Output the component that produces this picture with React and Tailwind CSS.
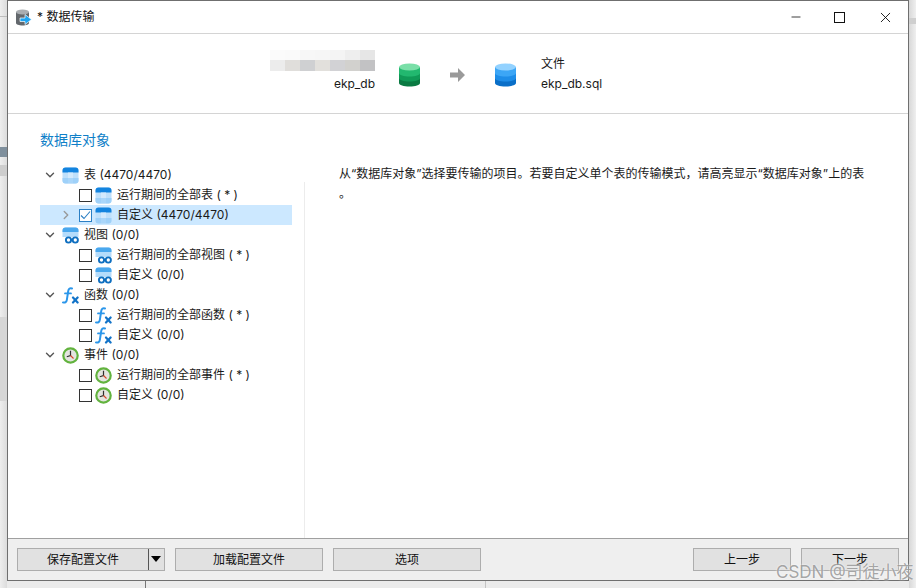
import { ChevronDown, ChevronRight, Minus, X } from "lucide-react";

const FONT = "[font-family:'Inter','Noto_Sans_CJK_SC',sans-serif]";

const MOSAIC_TOP = ["bg-[#fbfbfb]", "bg-[#fafafa]", "bg-[#f7f7f7]", "bg-[#f6f6f6]", "bg-[#f4f4f4]", "bg-[#eeeeee]", "bg-[#e6e6e6]"];
const MOSAIC_BOTTOM = ["bg-[#ececec]", "bg-[#e0dedb]", "bg-[#cfd0d2]", "bg-[#e2e0dc]", "bg-[#d2d2d5]", "bg-[#d2d1ce]", "bg-[#c2c2c4]"];

function TableIcon() {
  return (
    <svg width="17" height="17" viewBox="0 0 17 17">
      <rect x="0.5" y="0.5" width="16" height="16" rx="3" fill="#bfe0fb" />
      <path d="M0.5 5.500V3.500a3 3 0 0 1 3-3h10a3 3 0 0 1 3 3V5.500z" fill="#1384df" />
      <rect x="6" y="5.500" width="5" height="5.500" fill="#d3eafd" />
      <rect x="6" y="11" width="5" height="5.500" fill="#a9d6fa" />
      <path d="M0.500 11h5.500v5.500H3.500a3 3 0 0 1-3-3z" fill="#9fd1f9" />
      <path d="M11 11h5.500v2.500a3 3 0 0 1-3 3H11z" fill="#9fd1f9" />
    </svg>
  );
}

function ViewIcon() {
  return (
    <svg width="17" height="17" viewBox="0 0 17 17">
      <path d="M0.5 14V3.500a3 3 0 0 1 3-3h10a3 3 0 0 1 3 3V10H0.5z" fill="#b5dcfb" />
      <path d="M0.5 5V3.500a3 3 0 0 1 3-3h10a3 3 0 0 1 3 3V5z" fill="#4aa8ee" />
      <circle cx="6.500" cy="13" r="2.600" fill="#fff" stroke="#0f6fc0" strokeWidth="1.900" />
      <circle cx="13.300" cy="13" r="2.600" fill="#fff" stroke="#0f6fc0" strokeWidth="1.900" />
      <path d="M9 12.600h2" stroke="#0f6fc0" strokeWidth="1.400" />
    </svg>
  );
}

function FuncIcon() {
  return (
    <svg width="17" height="17" viewBox="0 0 17 17" fill="none">
      <path d="M10 1.500C7.600 .8 6.500 2 6.200 4.200L4.900 12.600C4.500 15 3.200 16 1 15.400" stroke="#2b96ea" strokeWidth="2" strokeLinecap="round" />
      <path d="M3 6.400h6" stroke="#2b96ea" strokeWidth="1.800" strokeLinecap="round" />
      <path d="M11 10.500l4.600 5M15.600 10.500l-4.600 5" stroke="#1273c8" strokeWidth="2.200" strokeLinecap="round" />
    </svg>
  );
}

function ClockIcon() {
  return (
    <svg width="17" height="17" viewBox="0 0 17 17" fill="none">
      <circle cx="8.500" cy="8.500" r="7.200" fill="#e4e4e0" stroke="#62b33e" strokeWidth="2.200" />
      <path d="M8.500 3.800v4.700L4.800 9.800" stroke="#2f2f2f" strokeWidth="1.200" />
      <path d="M8.500 8.500l3 3" stroke="#d8472b" strokeWidth="1.100" />
    </svg>
  );
}

function DbIcon({ colors }) {
  return (
    <svg width="21" height="24" viewBox="0 0 21 24">
      <path d="M0 4h21v16c0 2-4.700 3.500-10.500 3.500S0 22 0 20z" fill={colors[3]} />
      <path d="M0 4h21v11c0 2-4.700 3.500-10.500 3.500S0 17 0 15z" fill={colors[2]} />
      <path d="M0 4h21v6c0 2-4.700 3.500-10.500 3.500S0 12 0 10z" fill={colors[1]} />
      <ellipse cx="10.500" cy="4" rx="10.500" ry="3.500" fill={colors[0]} />
    </svg>
  );
}

function TitleIcon() {
  return (
    <svg width="16" height="17" viewBox="0 0 16 17">
      <path d="M0 3h13v11c0 1.400-2.900 2.500-6.500 2.500S0 15.400 0 14z" fill="#63686d" />
      <ellipse cx="6.500" cy="3" rx="6.500" ry="2.500" fill="#a9adb1" />
      <path d="M4 9h5V5.500l6.500 5-6.500 5V12.500H4z" fill="#1ea5f2" stroke="#fff" strokeWidth="0.700" />
    </svg>
  );
}

function Checkbox({ checked }) {
  return (
    <span className={`flex h-[13px] w-[13px] shrink-0 items-center justify-center border bg-white ${checked ? "border-[#2b7fc4]" : "border-[#333333]"}`}>
      {checked ? (
        <svg width="11" height="11" viewBox="0 0 11 11" fill="none">
          <path d="M1 5.500l3 3 6-7" stroke="#2b7fc4" strokeWidth="1.100" />
        </svg>
      ) : null}
    </span>
  );
}

const TREE = [
  { icon: TableIcon, label: "表 (4470/4470)", items: [
    { label: "运行期间的全部表 ( * )" },
    { label: "自定义 (4470/4470)", selected: true },
  ] },
  { icon: ViewIcon, label: "视图 (0/0)", items: [
    { label: "运行期间的全部视图 ( * )" },
    { label: "自定义 (0/0)" },
  ] },
  { icon: FuncIcon, label: "函数 (0/0)", items: [
    { label: "运行期间的全部函数 ( * )" },
    { label: "自定义 (0/0)" },
  ] },
  { icon: ClockIcon, label: "事件 (0/0)", items: [
    { label: "运行期间的全部事件 ( * )" },
    { label: "自定义 (0/0)" },
  ] },
];

function TreeGroup({ group }) {
  const Icon = group.icon;
  return (
    <div>
      <div className="flex h-5 items-center pl-[3px]">
        <ChevronDown size={14} strokeWidth={2.400} className="text-[#555555]" />
        <span className="ml-[5px] flex w-[22px] shrink-0"><Icon /></span>
        <span>{group.label}</span>
      </div>
      {group.items.map((item) => (
        <div key={item.label} className={`flex h-5 items-center ${item.selected ? "bg-[#cce8ff]" : ""}`}>
          <span className="flex w-[39px] shrink-0 justify-end pr-[6px]">
            {item.selected ? <ChevronRight size={14} strokeWidth={2.400} className="text-[#999999]" /> : null}
          </span>
          <Checkbox checked={item.selected} />
          <span className="ml-[3px] flex w-[22px] shrink-0"><Icon /></span>
          <span className="whitespace-nowrap">{item.label}</span>
        </div>
      ))}
    </div>
  );
}

function FooterButton({ className, children }) {
  return (
    <button type="button" className={`flex h-[23px] items-center justify-center border border-[#adadad] bg-[#e1e1e1] text-[#111111] ${className}`}>
      {children}
    </button>
  );
}

export default function App() {
  return (
    <div className={`${FONT} relative flex h-[588px] w-[916px] overflow-hidden bg-[#ebebeb] text-[12px] text-[#1a1a1a]`}>
      {/* stuff behind the dialog on the left */}
      <div className="flex h-full w-[7px] shrink-0 flex-col bg-linear-to-r from-[#eeeeee] to-[#dcdcdc]">
        <div className="mt-[16px] h-px bg-[#bdbdbd]" />
        <div className="mt-[130px] h-[10px] bg-[#7f8f9c]" />
        <div className="mt-[8px] h-[11px] bg-[#cdcdcd]" />
        <div className="mt-[141px] h-[84px] bg-[#d6d6d6]" />
      </div>

      <div className="flex h-[581px] w-[902px] shrink-0 flex-col border border-[#6f6f6f] bg-white">
        {/* title bar */}
        <div className="flex h-[33px] shrink-0 items-center border-b border-[#d4d4d4]">
          <span className="ml-[8px] flex"><TitleIcon /></span>
          <span className="ml-[5px] text-[#111111]">* 数据传输</span>
          <div className="ml-auto flex items-center">
            <Minus size={14} strokeWidth={1.300} className="text-black" />
            <span className="ml-[31px] h-[11px] w-[11px] border border-[#111111]" />
            <X size={17} strokeWidth={1.200} className="ml-[32px] mr-[14px] text-black" />
          </div>
        </div>

        {/* source and target */}
        <div className="flex h-[80px] shrink-0 border-b border-[#d4d4d4]">
          <div className="ml-[262px] flex w-[105px] flex-col items-end pt-[16px]">
            <div className="flex h-[10px]">
              {MOSAIC_TOP.map((c, i) => <span key={i} className={`h-full w-[15px] ${c}`} />)}
            </div>
            <div className="flex h-[11px]">
              {MOSAIC_BOTTOM.map((c, i) => <span key={i} className={`h-full w-[15px] ${c}`} />)}
            </div>
            <span className="mt-[4px] leading-[18px]">ekp_db</span>
          </div>
          <div className="ml-[24px] mt-[29px]">
            <DbIcon colors={["#7adfa8", "#22b86f", "#109a57", "#0a7a42"]} />
          </div>
          <svg width="15" height="14" viewBox="0 0 15 14" className="ml-[30px] mt-[34px]">
            <path d="M0 4.500h8V0l7 7-7 7V9.500H0z" fill="#9a9a9a" />
          </svg>
          <div className="ml-[30px] mt-[29px]">
            <DbIcon colors={["#93d2ff", "#3ca6f6", "#1e8de8", "#0a6fc8"]} />
          </div>
          <div className="ml-[25px] mt-[20px] flex flex-col leading-[20px]">
            <span>文件</span>
            <span>ekp_db.sql</span>
          </div>
        </div>

        {/* body */}
        <div className="flex min-h-0 flex-1">
          <div className="flex w-[296px] shrink-0 flex-col pl-[32px] pr-[12px]">
            <h2 className="mt-[16px] h-[35px] text-[14px] leading-[20px] font-normal text-[#0f7fc8]">数据库对象</h2>
            {TREE.map((group) => <TreeGroup key={group.label} group={group} />)}
          </div>
          <div className="mt-[68px] w-px shrink-0 bg-[#ececec]" />
          <div className="mt-[50px] flex-1 pl-[34px] leading-[20px] whitespace-nowrap">
            从“数据库对象”选择要传输的项目。若要自定义单个表的传输模式，请高亮显示“数据库对象”上的表
            <br />
            。
          </div>
        </div>

        {/* footer */}
        <div className="flex h-[42px] shrink-0 items-start border-t border-[#a0a0a0] bg-[#efefef] pl-[9px] pr-[9px] pt-[9px]">
          <FooterButton className="relative w-[148px] pr-[16px]">
            保存配置文件
            <span className="absolute right-[15px] top-0 h-full w-px bg-[#555555]" />
            <span className="absolute right-[3px] top-[7px] h-0 w-0 border-x-[5px] border-t-[6px] border-x-transparent border-t-black" />
          </FooterButton>
          <FooterButton className="ml-[10px] w-[148px]">加载配置文件</FooterButton>
          <FooterButton className="ml-[10px] w-[148px]">选项</FooterButton>
          <FooterButton className="ml-auto w-[98px]">上一步</FooterButton>
          <FooterButton className="ml-[10px] w-[98px]">下一步</FooterButton>
        </div>
      </div>

      <div className="flex h-full flex-1 flex-col bg-linear-to-r from-[#d8d8d8] to-[#efefef]">
        <div className="mt-[18px] h-[6px] bg-[#cfcfcf]" />
      </div>

      {/* watermark over the corner of the shot */}
      <span className="absolute left-[776px] top-[563px] text-[17px] leading-[18px] whitespace-nowrap text-[#8f8f8f]/80 [text-shadow:0_0_2px_#ffffff]">
        CSDN @司徒小夜
      </span>
      <span className="absolute left-[145px] top-[581px] h-[7px] w-px bg-[#777777]" />
      <span className="absolute left-[485px] top-[581px] h-[7px] w-px bg-[#c4c4c4]" />
    </div>
  );
}
